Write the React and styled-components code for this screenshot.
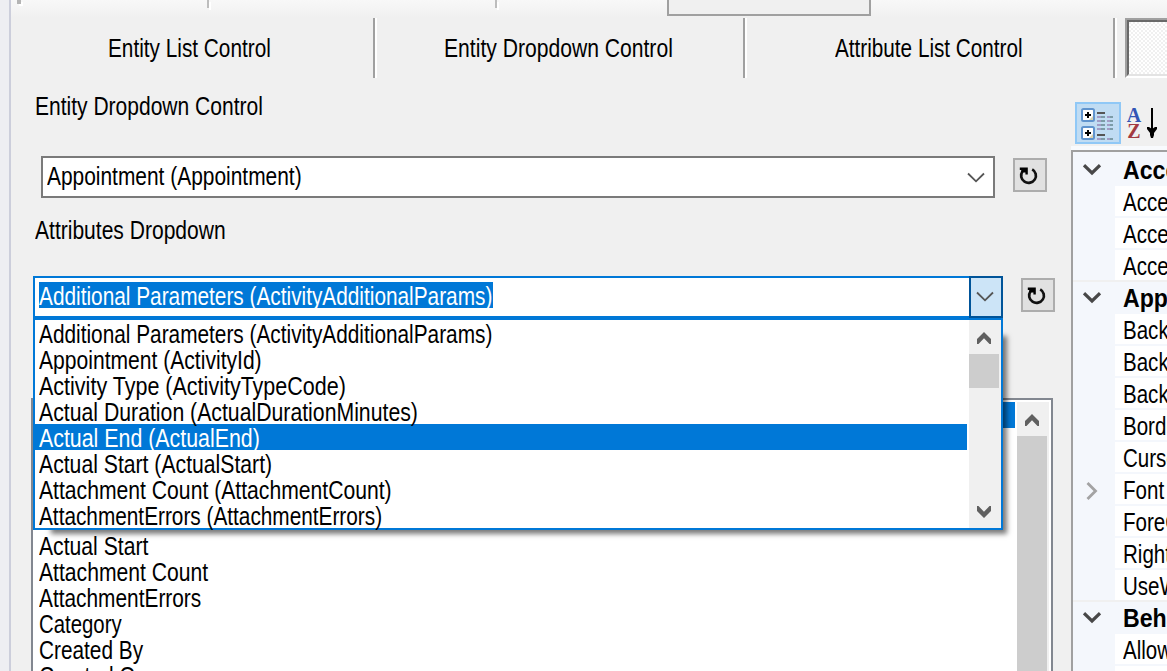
import React, { useLayoutEffect, useRef, useState } from "react";
import styled, { createGlobalStyle, css } from "styled-components";

const Global = createGlobalStyle`
  * { box-sizing: border-box; }
  html, body { margin: 0; padding: 0; overflow: hidden; }
  body { font-family: "Liberation Sans", Arial, sans-serif; font-size: 26px; color: #000; }
  svg { display: block; flex: none; }
`;

/* ---------- condensed text ---------- */

const TextBox = styled.span`
  display: block;
  flex: none;
  height: 26px;
  line-height: 28px;
  white-space: nowrap;
  width: ${(p) => (p.$width ? `${p.$width}px` : "auto")};
  font-weight: ${(p) => (p.$bold ? 700 : 400)};
`;

const TextInner = styled.span`
  display: inline-block;
  transform-origin: 0 50%;
`;

function Text({ width, bold, children }) {
  const ref = useRef(null);
  const [scale, setScale] = useState(bold ? 0.89 : 0.79);
  useLayoutEffect(() => {
    if (width && ref.current) setScale(width / ref.current.offsetWidth);
  }, [width]);
  return (
    <TextBox $width={width} $bold={bold}>
      <TextInner ref={ref} style={{ transform: `scaleX(${scale})` }}>
        {children}
      </TextInner>
    </TextBox>
  );
}

/* ---------- window frame ---------- */

const Window = styled.div`
  display: flex;
  width: 1167px;
  height: 671px;
  overflow: hidden;
  background: #f0f0f0;
`;

const Edge = styled.div`
  flex: none;
  width: 11px;
  background: #eeeef2;
  border-right: 2px solid #cccedb;
`;

const Main = styled.div`
  flex: 1;
  min-width: 0;
  display: flex;
  flex-direction: column;
`;

const UpperStrip = styled.div`
  flex: none;
  height: 18px;
  display: flex;
  align-items: flex-start;
  background: linear-gradient(#f8f8f8, #f0f0f0);
`;

const Grip = styled.div`
  width: 4px;
  height: 4px;
  margin: 0 186px 0 6px;
  background: #b4b4b4;
  box-shadow: 2px 2px 0 #fff;
`;

const StripDivider = styled.div`
  width: 2px;
  height: 8px;
  margin-right: ${(p) => p.$after}px;
  background: #bdbdbd;
  box-shadow: 2px 2px 0 #fff;
`;

const StripButton = styled.div`
  width: 204px;
  height: 16px;
  background: #f0f0f0;
  border: 2px solid #a0a0a0;
  border-top: 0;
`;

const Tabs = styled.div`
  flex: none;
  height: 60px;
  display: flex;
`;

const Tab = styled.div`
  flex: none;
  width: ${(p) => p.$width}px;
  padding: 16px 0 0 ${(p) => p.$indent}px;
  border-right: 2px solid #fff;
  box-shadow: inset -2px 0 0 #a0a0a0;
`;

const PressedTab = styled.div`
  flex: none;
  width: 60px;
  margin-left: 8px;
  border: 2px solid;
  border-color: #a0a0a0 #fff #fff #a0a0a0;
  background: #f0f0f0;
`;

const PressedFace = styled.div`
  height: 56px;
  border: 2px solid;
  border-color: #696969 #e3e3e3 #e3e3e3 #696969;
  background: repeating-conic-gradient(#fff 0 25%, #f0f0f0 0 50%) 0 0 / 4px 4px;
`;

const Body = styled.div`
  flex: 1;
  min-height: 0;
  display: flex;
`;

/* ---------- form ---------- */

const Form = styled.div`
  flex: none;
  width: 1060px;
  display: flex;
  flex-direction: column;
`;

const FieldLabel = styled.div`
  padding-left: 24px;
  margin-top: ${(p) => p.$top}px;
`;

const FieldRow = styled.div`
  display: flex;
  align-items: flex-start;
  gap: 18px;
  height: 42px;
  margin: ${(p) => p.$top}px 0 0 ${(p) => p.$left}px;
`;

const Combo = styled.div`
  position: relative;
  display: flex;
  justify-content: space-between;
  height: 42px;
  background: #fff;
  ${(p) =>
    p.$open
      ? css`
          width: 970px;
          border: 2px solid #0078d7;
          padding: 4px 0 0 4px;
        `
      : css`
          width: 954px;
          border: 2px solid #7a7a7a;
          padding: 4px 8px 0 4px;
        `}
`;

const Selected = styled.div`
  height: 26px;
  width: 454px;
  background: #0078d7;
  color: #fff;
`;

const DropButton = styled.div`
  width: 34px;
  height: 42px;
  margin: -6px -2px 0 0;
  padding-right: 2px;
  display: flex;
  align-items: center;
  justify-content: center;
  background: #cce4f7;
  border: 2px solid #005499;
`;

const ArrowSlot = styled.div`
  padding-top: 10px;
`;

const RefreshButton = styled.div`
  width: 34px;
  height: 34px;
  margin-top: 2px;
  display: flex;
  align-items: center;
  justify-content: center;
  background: #e1e1e1;
  border: 2px solid #adadad;
`;

const Popup = styled.div`
  position: absolute;
  z-index: 2;
  left: -2px;
  top: 40px;
  width: 970px;
  height: 212px;
  display: flex;
  background: #fff;
  border: 2px solid #0078d7;
  &::before {
    content: "";
    position: absolute;
    z-index: -1;
    left: 14px;
    top: 14px;
    right: -2px;
    bottom: -2px;
    box-shadow: 3px 3px 5px 1px rgba(0, 0, 0, 0.52);
    clip-path: polygon(
      -10px 100%, 100% 100%, 100% -10px, calc(100% + 12px) -10px,
      calc(100% + 12px) calc(100% + 12px), -10px calc(100% + 12px)
    );
  }
`;

const Items = styled.div`
  flex: 1;
  min-width: 0;
  margin-right: 2px;
`;

const Item = styled.div`
  height: 26px;
  padding-left: 4px;
  background: ${(p) => (p.$active ? "#0078d7" : "transparent")};
  color: ${(p) => (p.$active ? "#fff" : "#000")};
`;

const Scrollbar = styled.div`
  flex: none;
  width: 32px;
  display: flex;
  flex-direction: column;
  align-items: flex-start;
  background: #f0f0f0;
`;

const ScrollArrow = styled.div`
  width: 30px;
  height: 34px;
  display: flex;
  justify-content: center;
  padding-top: 12px;
`;

const Thumb = styled.div`
  width: 30px;
  background: #cdcdcd;
  ${(p) => (p.$height ? `height: ${p.$height}px; margin-bottom: auto;` : "flex: 1;")}
`;

const ListBox = styled.div`
  flex: 1;
  min-height: 0;
  width: 1022px;
  margin: 80px 0 0 20px;
  padding: 2px 2px 0 2px;
  display: flex;
  overflow: hidden;
  background: #fff;
  border: 2px solid #828790;
  border-bottom: 0;
`;

/* ---------- property grid ---------- */

const Properties = styled.div`
  flex: 1;
  min-width: 0;
  display: flex;
  flex-direction: column;
`;

const GridTools = styled.div`
  flex: none;
  height: 72px;
  padding: 24px 0 0 4px;
  display: flex;
  gap: 6px;
  border-bottom: 4px solid #f8fafd;
`;

const CategorizedButton = styled.div`
  width: 46px;
  height: 42px;
  background: #c0dcf3;
  border: 2px solid #90c8f6;
`;

const Grid = styled.div`
  flex: 1;
  min-height: 0;
  overflow: hidden;
  padding-top: 2px;
  background: #f4f7fc;
  border: 2px solid #a0a0a0;
  border-right: 0;
  border-bottom: 0;
`;

const GridRow = styled.div`
  height: 32px;
  display: flex;
`;

const Gutter = styled.div`
  flex: none;
  width: 42px;
  height: 32px;
  display: flex;
  justify-content: center;
  padding: ${(p) => (p.$header ? 10 : 8)}px 4px 0 0;
`;

const Cell = styled.div`
  flex: 1;
  min-width: 0;
  height: ${(p) => (p.$header ? 32 : 30)}px;
  padding: 2px 0 0 8px;
  overflow: hidden;
  background: ${(p) => (p.$header ? "#f4f7fc" : "#fff")};
`;

const GroupRule = styled.div`
  height: 2px;
  margin-top: -2px;
  background: #f0f0f0;
`;

/* ---------- icons ---------- */

const ThinChevron = () => (
  <svg width="18" height="12" viewBox="0 0 18 12" fill="none" stroke="#555" strokeWidth="1.8">
    <path d="M1 1.5 L9 9.3 L17 1.5" />
  </svg>
);

const ScrollUp = () => (
  <svg width="14" height="12" viewBox="0 0 14 12" fill="#606060">
    <path d="M7 0 L14 7 V12 H12.5 L7 6.2 L1.5 12 H0 V7 Z" />
  </svg>
);

const ScrollDown = () => (
  <svg width="14" height="12" viewBox="0 0 14 12" fill="#606060">
    <path d="M7 12 L14 5 V0 H12.5 L7 5.8 L1.5 0 H0 V5 Z" />
  </svg>
);

const GroupChevron = () => (
  <svg width="18" height="12" viewBox="0 0 18 12" fill="none" stroke="#484848" strokeWidth="3.2">
    <path d="M1 1.2 L9 9 L17 1.2" />
  </svg>
);

const ExpandChevron = () => (
  <svg width="12" height="18" viewBox="0 0 12 18" fill="none" stroke="#a3a3a3" strokeWidth="2.8">
    <path d="M1.5 1 L9.5 9 L1.5 17" />
  </svg>
);

const Refresh = () => (
  <svg width="22" height="20" viewBox="0 0 22 20" fill="none">
    <path d="M3.4 6.6 A7.4 7.2 0 1 0 13.2 4.4" stroke="#111" strokeWidth="2.7" />
    <path d="M0.8 2.6 H8.8 V9.4 H6.4 V7.6 H2.2 V5 H0.8 Z" fill="#000" />
  </svg>
);

const Categorized = () => (
  <svg width="42" height="38" viewBox="0 0 42 38">
    {[4, 22].map((y) => (
      <g key={y}>
        <rect x="5" y={y + 1} width="12" height="12" rx="1.5" fill="#fff" stroke="#6094ce" strokeWidth="2" />
        <path d={`M12 ${y + 12} H16 V${y + 8}`} fill="#d8d2b0" />
        <path d={`M8 ${y + 7} H14 M11 ${y + 4} V${y + 10}`} stroke="#000" strokeWidth="2" />
      </g>
    ))}
    <path d="M20 9 H28 M20 31 H28" stroke="#555" strokeWidth="2" />
    {[13, 17, 21, 25, 35].map((y) => (
      <g key={y} strokeWidth="2">
        <path d={`M20 ${y} H24 M30 ${y} H33`} stroke="#a19bc5" />
        <path d={`M24 ${y} H28 M33 ${y} H36`} stroke="#7c9ca8" />
      </g>
    ))}
  </svg>
);

const SortTools = styled.div`
  display: flex;
  gap: 5px;
  padding-top: 5px;
`;

const Letters = styled.div`
  display: flex;
  flex-direction: column;
  align-items: center;
  width: 14px;
  font: 700 20px/16px "Liberation Serif", serif;
  color: #3355b5;
`;

const LetterZ = styled.span`
  color: #a33a42;
`;

const SortArrow = () => (
  <svg width="12" height="32" viewBox="0 0 12 32">
    <path d="M6 1 V28" stroke="#000" strokeWidth="2" />
    <path d="M1 20 H3 L6 22 L9 20 H11 V22 L8 26 V28 L7 31 H5 L4 28 V26 L1 22 Z" fill="#000" />
  </svg>
);

/* ---------- data ---------- */

const attributes = [
  ["Additional Parameters (ActivityAdditionalParams)", 453],
  ["Appointment (ActivityId)", 223],
  ["Activity Type (ActivityTypeCode)", 307],
  ["Actual Duration (ActualDurationMinutes)", 379],
  ["Actual End (ActualEnd)", 221],
  ["Actual Start (ActualStart)", 233],
  ["Attachment Count (AttachmentCount)", 353],
  ["AttachmentErrors (AttachmentErrors)", 343],
];

const listItems = [
  ["", 0], ["", 0], ["", 0], ["", 0], ["", 0],
  ["Actual Start", 109],
  ["Attachment Count", 169],
  ["AttachmentErrors", 162],
  ["Category", 83],
  ["Created By", 104],
  ["Created On", 108],
];

const groups = [
  { name: "Accessibility", rows: ["AccessibleDescription", "AccessibleName", "AccessibleRole"] },
  {
    name: "Appearance",
    rows: [
      "BackColor", "BackgroundImage", "BackgroundImageLayout", "BorderStyle", "Cursor",
      "Font", "ForeColor", "RightToLeft", "UseWaitCursor",
    ],
  },
  { name: "Behavior", rows: ["AllowDrop", "AutoValidate"] },
];

export default function App() {
  return (
    <Window>
      <Global />
      <Edge />
      <Main>
        <UpperStrip>
          <Grip />
          <StripDivider $after={286} />
          <StripDivider $after={170} />
          <StripButton />
        </UpperStrip>
        <Tabs>
          <Tab $width={366} $indent={97}><Text width={163}>Entity List Control</Text></Tab>
          <Tab $width={370} $indent={67}><Text width={229}>Entity Dropdown Control</Text></Tab>
          <Tab $width={370} $indent={88}><Text width={188}>Attribute List Control</Text></Tab>
          <PressedTab><PressedFace /></PressedTab>
        </Tabs>
        <Body>
          <Form>
            <FieldLabel $top={14}><Text width={228}>Entity Dropdown Control</Text></FieldLabel>
            <FieldRow $top={38} $left={30}>
              <Combo>
                <Text width={255}>Appointment (Appointment)</Text>
                <ArrowSlot><ThinChevron /></ArrowSlot>
              </Combo>
              <RefreshButton><Refresh /></RefreshButton>
            </FieldRow>
            <FieldLabel $top={18}><Text width={191}>Attributes Dropdown</Text></FieldLabel>
            <FieldRow $top={34} $left={22}>
              <Combo $open>
                <Selected><Text width={453}>{attributes[0][0]}</Text></Selected>
                <DropButton><ThinChevron /></DropButton>
                <Popup>
                  <Items>
                    {attributes.map(([label, width], i) => (
                      <Item key={label} $active={i === 4}><Text width={width}>{label}</Text></Item>
                    ))}
                  </Items>
                  <Scrollbar>
                    <ScrollArrow><ScrollUp /></ScrollArrow>
                    <Thumb $height={34} />
                    <ScrollArrow><ScrollDown /></ScrollArrow>
                  </Scrollbar>
                </Popup>
              </Combo>
              <RefreshButton><Refresh /></RefreshButton>
            </FieldRow>
            <ListBox>
              <Items>
                {listItems.map(([label, width], i) => (
                  <Item key={i} $active={i === 0}>{label && <Text width={width}>{label}</Text>}</Item>
                ))}
              </Items>
              <Scrollbar>
                <ScrollArrow><ScrollUp /></ScrollArrow>
                <Thumb />
              </Scrollbar>
            </ListBox>
          </Form>
          <Properties>
            <GridTools>
              <CategorizedButton><Categorized /></CategorizedButton>
              <SortTools>
                <Letters><span>A</span><LetterZ>Z</LetterZ></Letters>
                <SortArrow />
              </SortTools>
            </GridTools>
            <Grid>
              {groups.map((group, g) => (
                <React.Fragment key={group.name}>
                  {g > 0 && <GroupRule />}
                  <GridRow>
                    <Gutter $header><GroupChevron /></Gutter>
                    <Cell $header><Text bold>{group.name}</Text></Cell>
                  </GridRow>
                  {group.rows.map((name) => (
                    <GridRow key={name}>
                      <Gutter>{name === "Font" && <ExpandChevron />}</Gutter>
                      <Cell><Text>{name}</Text></Cell>
                    </GridRow>
                  ))}
                </React.Fragment>
              ))}
            </Grid>
          </Properties>
        </Body>
      </Main>
    </Window>
  );
}
